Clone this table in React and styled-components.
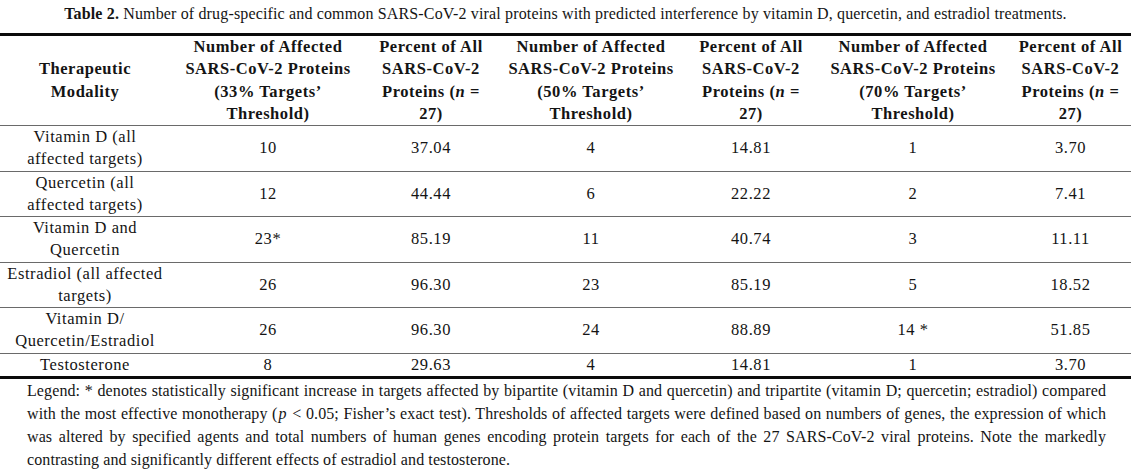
import React from 'react';
import styled, { createGlobalStyle } from 'styled-components';

const GlobalStyle = createGlobalStyle`
  html, body {
    margin: 0;
    padding: 0;
    background: #fff;
  }
  body {
    font-family: "Liberation Serif", "Times New Roman", serif;
    color: #141414;
  }
`;

const Page = styled.div`
  width: 1131px;
  height: 469px;
  overflow: hidden;
  background: #fff;
`;

const Caption = styled.div`
  text-align: center;
  font-size: 16px;
  line-height: 22px;
  padding-top: 3px;
  height: 33px;
  box-sizing: border-box;
  letter-spacing: 0.15px;

  b {
    font-weight: bold;
  }
`;

const Table = styled.table`
  width: 1131px;
  border-collapse: collapse;
  table-layout: fixed;
  font-family: "Liberation Serif", "Times New Roman", serif;
  font-size: 16.5px;
  line-height: 22.25px;
  letter-spacing: 0.55px;
  color: #141414;
  border-top: 3px solid #0a0a0a;
  border-bottom: 3px solid #0a0a0a;
`;

const HeadCell = styled.th`
  font-weight: bold;
  text-align: center;
  vertical-align: middle;
  padding: 0;
  border-bottom: 1px solid #6a6a6a;
`;

const Cell = styled.td`
  text-align: center;
  vertical-align: middle;
  padding: 0;
  border-bottom: ${(p) => (p.$last ? 'none' : '1px solid #6a6a6a')};
`;

const Legend = styled.p`
  margin: 0;
  padding: 0 25px 0 27px;
  font-size: 16px;
  line-height: 23px;
  text-align: justify;
  letter-spacing: 0.1px;
`;

const Var = styled.i`
  font-style: italic;
  margin: 0 1px;
`;

const widths = [170, 196, 130, 190, 130, 194, 121];

const headers = [
  ['Therapeutic', 'Modality'],
  ['Number of Affected', 'SARS-CoV-2 Proteins', '(33% Targets\u2019', 'Threshold)'],
  ['Percent of All', 'SARS-CoV-2', 'Proteins (', 'n', ' =', '27)'],
  ['Number of Affected', 'SARS-CoV-2 Proteins', '(50% Targets\u2019', 'Threshold)'],
  ['Percent of All', 'SARS-CoV-2', 'Proteins (', 'n', ' =', '27)'],
  ['Number of Affected', 'SARS-CoV-2 Proteins', '(70% Targets\u2019', 'Threshold)'],
  ['Percent of All', 'SARS-CoV-2', 'Proteins (', 'n', ' =', '27)'],
];

const rows = [
  { name: ['Vitamin D (all', 'affected targets)'], values: ['10', '37.04', '4', '14.81', '1', '3.70'] },
  { name: ['Quercetin (all', 'affected targets)'], values: ['12', '44.44', '6', '22.22', '2', '7.41'] },
  { name: ['Vitamin D and', 'Quercetin'], values: ['23*', '85.19', '11', '40.74', '3', '11.11'] },
  { name: ['Estradiol (all affected', 'targets)'], values: ['26', '96.30', '23', '85.19', '5', '18.52'] },
  { name: ['Vitamin D/', 'Quercetin/Estradiol'], values: ['26', '96.30', '24', '88.89', '14 *', '51.85'] },
  { name: ['Testosterone'], values: ['8', '29.63', '4', '14.81', '1', '3.70'] },
];

function HeaderText({ parts }) {
  if (parts.length === 6) {
    return (
      <>
        {parts[0]}
        <br />
        {parts[1]}
        <br />
        {parts[2]}
        <i>{parts[3]}</i>
        {parts[4]}
        <br />
        {parts[5]}
      </>
    );
  }
  return parts.map((line, i) => (
    <React.Fragment key={i}>
      {i > 0 && <br />}
      {line}
    </React.Fragment>
  ));
}

export default function App() {
  return (
    <Page>
      <GlobalStyle />
      <Caption>
        <b>Table 2.</b> Number of drug-specific and common SARS-CoV-2 viral proteins with predicted
        interference by vitamin D, quercetin, and estradiol treatments.
      </Caption>
      <Table>
        <colgroup>
          {widths.map((w, i) => (
            <col key={i} style={{ width: w }} />
          ))}
        </colgroup>
        <thead>
          <tr>
            {headers.map((h, i) => (
              <HeadCell key={i}>
                <HeaderText parts={h} />
              </HeadCell>
            ))}
          </tr>
        </thead>
        <tbody>
          {rows.map((r, ri) => {
            const last = ri === rows.length - 1;
            return (
              <tr key={ri}>
                <Cell $last={last}>
                  {r.name.map((line, i) => (
                    <React.Fragment key={i}>
                      {i > 0 && <br />}
                      {line}
                    </React.Fragment>
                  ))}
                </Cell>
                {r.values.map((v, vi) => (
                  <Cell key={vi} $last={last}>
                    {v}
                  </Cell>
                ))}
              </tr>
            );
          })}
        </tbody>
      </Table>
      <Legend>
        Legend: * denotes statistically significant increase in targets affected by bipartite (vitamin D
        and quercetin) and tripartite (vitamin D; quercetin; estradiol) compared with the most effective
        monotherapy (<Var>p</Var> &lt; 0.05; Fisher{'\u2019'}s exact test). Thresholds of affected targets were
        defined based on numbers of genes, the expression of which was altered by specified agents and
        total numbers of human genes encoding protein targets for each of the 27 SARS-CoV-2 viral
        proteins. Note the markedly contrasting and significantly different effects of estradiol and
        testosterone.
      </Legend>
    </Page>
  );
}
